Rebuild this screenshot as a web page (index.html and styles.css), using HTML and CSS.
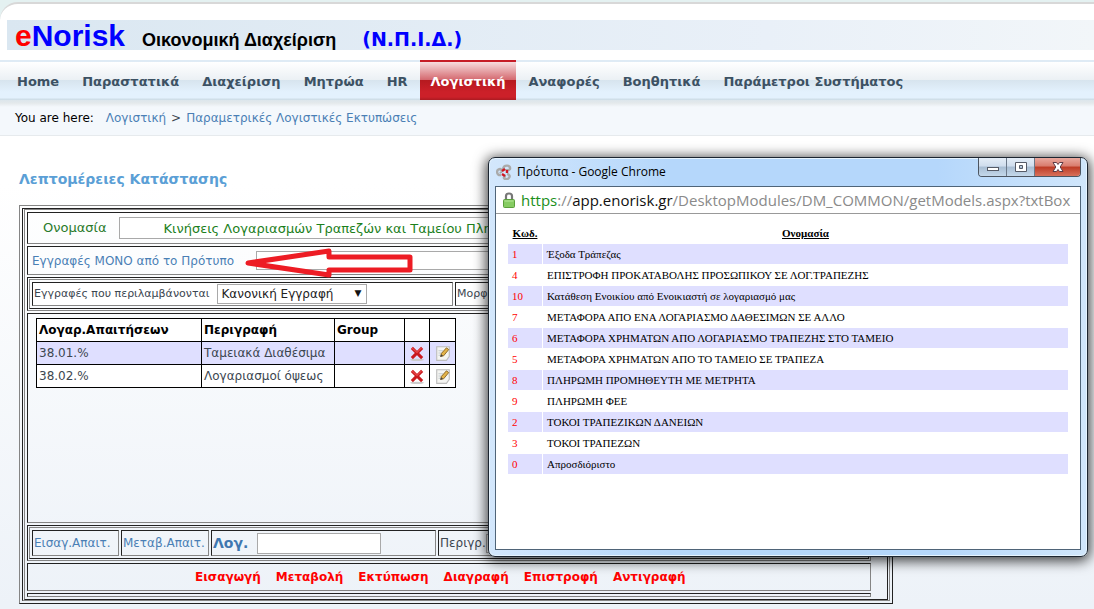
FILE: index.html
```html
<!DOCTYPE html>
<html lang="el">
<head>
<meta charset="utf-8">
<title>eNorisk - Οικονομική Διαχείριση</title>
<link rel="stylesheet" href="styles.css">
</head>
<body>
<svg class="defs" aria-hidden="true">
  <symbol id="icon-delete" viewBox="1 1 14 14">
    <ellipse cx="8" cy="14" rx="6" ry="1" fill="#ccc"/>
    <path d="M3.5 3.5 L12.500 12.500 M12.500 3.500 L3.500 12.500" stroke="#c9191e" stroke-width="2.600"/>
    <path d="M3.500 3.500 L8 7.500 L12 3.500" stroke="#e8494a" stroke-width="1" fill="none"/>
  </symbol>
  <symbol id="icon-edit" viewBox="1 1 14 14">
    <path d="M2.500 2.500 H13.500 V11 L11 14.500 H2.500 Z" fill="#f5f5f2" stroke="#bdbdbd"/>
    <path d="M4 6 H8 M4 8 H7 M4 10 H6" stroke="#c4cbd0"/>
    <path d="M6 11 L6.500 8.500 L11 3.500 L13 5 L8.500 10.500 Z" fill="#e3b348" stroke="#876320" stroke-width=".8"/>
    <path d="M5.500 11.500 L6.500 9 L8 10.500 Z" fill="#444"/>
  </symbol>
</svg>
<div class="page">
  <header class="banner">
    <h1 class="logo"><span class="logo-e">e</span>Norisk</h1>
    <span class="app-name">Οικονομική Διαχείριση</span>
    <span class="org">(Ν.Π.Ι.Δ.)</span>
  </header>
  <nav class="nav">
    <a href="#">Home</a>
    <a href="#">Παραστατικά</a>
    <a href="#">Διαχείριση</a>
    <a href="#">Μητρώα</a>
    <a href="#">HR</a>
    <a href="#" class="active">Λογιστική</a>
    <a href="#">Αναφορές</a>
    <a href="#">Βοηθητικά</a>
    <a href="#">Παράμετροι Συστήματος</a>
  </nav>
  <div class="crumbs">
    <span class="here">You are here:</span>
    <a href="#">Λογιστική</a><span>&gt;</span><a href="#">Παραμετρικές Λογιστικές Εκτυπώσεις</a>
  </div>
  <main class="content">
    <h2 class="title">Λεπτομέρειες Κατάστασης</h2>
    <div class="outset outer">
      <div class="inset frame">
        <div class="outset form">
          <div class="inset row-name">
            <label for="name">Ονομασία</label>
            <input id="name" class="name-box" value="Κινήσεις Λογαριασμών Τραπεζών και Ταμείου Πληρωμών">
          </div>
          <div class="inset row-model">
            <label for="model">Εγγραφές ΜΟΝΟ από το Πρότυπο</label>
            <input id="model" class="model-box">
            <svg class="arrow" viewBox="0 0 168 30" aria-hidden="true">
              <path d="M3 15 L84 3 V9 H165 V22 H84 V27 Z" fill="none" stroke="#ed1c24" stroke-width="5" stroke-linejoin="round"/>
            </svg>
          </div>
          <div class="inset wrap">
            <div class="outset cells filter">
              <div class="inset cell">
                <label for="kind">Εγγραφές που περιλαμβάνονται</label>
                <span class="select"><select id="kind"><option>Κανονική Εγγραφή</option></select></span>
              </div>
              <div class="inset cell">Μορφή</div>
            </div>
          </div>
          <div class="inset grid-area">
            <table class="accounts">
              <colgroup><col class="c-acc"><col class="c-desc"><col class="c-group"><col class="c-del"><col class="c-edit"></colgroup>
              <thead><tr><th>Λογαρ.Απαιτήσεων</th><th>Περιγραφή</th><th>Group</th><th></th><th></th></tr></thead>
              <tbody>
                <tr><td>38.01.%</td><td>Ταμειακά Διαθέσιμα</td><td></td>
                  <td><button aria-label="Διαγραφή 38.01"><svg><use href="#icon-delete"/></svg></button></td>
                  <td><button aria-label="Μεταβολή 38.01"><svg><use href="#icon-edit"/></svg></button></td></tr>
                <tr><td>38.02.%</td><td>Λογαριασμοί όψεως</td><td></td>
                  <td><button aria-label="Διαγραφή 38.02"><svg><use href="#icon-delete"/></svg></button></td>
                  <td><button aria-label="Μεταβολή 38.02"><svg><use href="#icon-edit"/></svg></button></td></tr>
              </tbody>
            </table>
          </div>
          <div class="inset wrap">
            <div class="outset cells entry">
              <div class="inset cell"><a href="#">Εισαγ.Απαιτ.</a></div>
              <div class="inset cell"><a href="#">Μεταβ.Απαιτ.</a></div>
              <div class="inset cell"><label class="acc-label" for="acc">Λογ.</label><input id="acc" class="acc-box"></div>
              <div class="inset cell"><label for="desc">Περιγρ.</label><input id="desc" class="desc-box"></div>
            </div>
          </div>
          <div class="inset actions">
            <a href="#">Εισαγωγή</a>
            <a href="#">Μεταβολή</a>
            <a href="#">Εκτύπωση</a>
            <a href="#">Διαγραφή</a>
            <a href="#">Επιστροφή</a>
            <a href="#">Αντιγραφή</a>
          </div>
          <div class="inset row-end"></div>
        </div>
      </div>
    </div>
  </main>
</div>

<section class="window" aria-label="Πρότυπα">
  <div class="titlebar">
    <svg class="favicon" viewBox="0 0 16 16" aria-hidden="true">
      <g fill="none" stroke="#aaa" stroke-width="2.400">
        <path d="M7 5 C8 0 15 1 14 5 C13 7 10 6 10 5"/>
        <path d="M11 10 C16 11 13 16 9 15 C7 14 8 12 10 12"/>
        <path d="M5 11 C0 12 0 5 4 5 C7 6 5 9 4 8"/>
      </g>
      <g fill="none" stroke="#cf1822" stroke-width="2.400">
        <path d="M6 7 L9 5 M11 6 L11 9 M9 12 L6 10"/>
      </g>
    </svg>
    <span class="window-title">Πρότυπα - Google Chrome</span>
    <div class="controls">
      <button aria-label="Minimize"><svg viewBox="0 0 14 12"><rect x="1.500" y="6.500" width="11" height="3" fill="#fff" stroke="#555a66"/></svg></button>
      <button aria-label="Maximize"><svg viewBox="0 0 14 12"><path d="M1.500 1.500 H12.500 V10.500 H1.500 Z M5.500 4.500 V7.500 H8.500 V4.500 Z" fill="#fff" fill-rule="evenodd" stroke="#555a66"/></svg></button>
      <button class="close" aria-label="Close"><svg viewBox="0 0 14 12"><path d="M2 1.500 H5.500 L7 3.500 L8.500 1.500 H12 L9.200 6 L12 10.500 H8.500 L7 8.500 L5.500 10.500 H2 L4.800 6 Z" fill="#fff" stroke="#5e3b45"/></svg></button>
    </div>
  </div>
  <div class="view">
    <div class="address">
      <svg class="lock" viewBox="0 0 12 16" aria-hidden="true">
        <path d="M3 8 V4 Q3 1.500 6 1.500 T9 4 V8" fill="none" stroke="#777" stroke-width="2.200"/>
        <rect x=".5" y="7.500" width="11" height="8" rx="1" fill="#86cc62" stroke="#5a9e3c"/>
        <path d="M1.500 9 H10.500" stroke="#b6e79a"/>
      </svg>
      <span class="url"><span class="scheme">https</span>://<span class="host">app.enorisk.gr</span>/DesktopModules/DM_COMMON/getModels.aspx?txtBox</span>
    </div>
    <table class="models">
      <thead><tr><th class="code"><a href="#">Κωδ.</a></th><th><a href="#">Ονομασία</a></th></tr></thead>
      <tbody>
        <tr><td>1</td><td>Έξοδα Τράπεζας</td></tr>
        <tr><td>4</td><td>ΕΠΙΣΤΡΟΦΗ ΠΡΟΚΑΤΑΒΟΛΗΣ ΠΡΟΣΩΠΙΚΟΥ ΣΕ ΛΟΓ.ΤΡΑΠΕΖΗΣ</td></tr>
        <tr><td>10</td><td>Κατάθεση Ενοικίου από Ενοικιαστή σε λογαριασμό μας</td></tr>
        <tr><td>7</td><td>ΜΕΤΑΦΟΡΑ ΑΠΟ ΕΝΑ ΛΟΓΑΡΙΑΣΜΟ ΔΑΘΕΣΙΜΩΝ ΣΕ ΑΛΛΟ</td></tr>
        <tr><td>6</td><td>ΜΕΤΑΦΟΡΑ ΧΡΗΜΑΤΩΝ ΑΠΟ ΛΟΓΑΡΙΑΣΜΟ ΤΡΑΠΕΖΗΣ ΣΤΟ ΤΑΜΕΙΟ</td></tr>
        <tr><td>5</td><td>ΜΕΤΑΦΟΡΑ ΧΡΗΜΑΤΩΝ ΑΠΟ ΤΟ ΤΑΜΕΙΟ ΣΕ ΤΡΑΠΕΖΑ</td></tr>
        <tr><td>8</td><td>ΠΛΗΡΩΜΗ ΠΡΟΜΗΘΕΥΤΗ ΜΕ ΜΕΤΡΗΤΑ</td></tr>
        <tr><td>9</td><td>ΠΛΗΡΩΜΗ ΦΕΕ</td></tr>
        <tr><td>2</td><td>ΤΟΚΟΙ ΤΡΑΠΕΖΙΚΩΝ ΔΑΝΕΙΩΝ</td></tr>
        <tr><td>3</td><td>ΤΟΚΟΙ ΤΡΑΠΕΖΩΝ</td></tr>
        <tr><td>0</td><td>Απροσδιόριστο</td></tr>
      </tbody>
    </table>
  </div>
</section>
</body>
</html>
```

FILE: styles.css
```css
* { box-sizing: border-box; }
body {
  margin: 0;
  background: #e4f1f1;
  font: 12px/16px "DejaVu Sans", sans-serif;
  color: #3c4650;
  overflow: hidden;
}
a { color: #4a7fb5; text-decoration: none; }
input {
  border: 1px solid #a9a9a9;
  background: #fff;
  padding: 0;
  font: inherit;
}
button { border: 0; padding: 0; background: none; }
.defs { display: none; }

.page {
  margin-top: 2px;
  border-top: 2px solid #d8d8d8;
  border-radius: 18px 0 0 0;
  background: linear-gradient(#fff 0, #fff 180px, #edf2f8 600px);
  min-height: calc(100vh - 2px);
  overflow: hidden;
}

/* Banner */
.banner {
  display: flex;
  align-items: baseline;
  height: 30px;
  margin: 16px 0 10px 7px;
  padding-left: 8px;
  background: linear-gradient(90deg, #dae7f1, #e9f0f8 70%, #f2f6f9);
  white-space: nowrap;
}
.logo {
  margin: 0;
  font: bold 30px/32px "Liberation Sans", sans-serif;
  color: #00f;
}
.logo-e { color: #f00; }
.app-name {
  margin-left: 17px;
  font: bold 18px/30px "Liberation Sans", sans-serif;
  color: #000;
}
.org {
  margin-left: 26px;
  font: bold 19px/30px "DejaVu Sans", sans-serif;
  color: #00f;
}

/* Navigation */
.nav {
  display: flex;
  gap: 1px;
  padding-left: 6px;
  height: 40px;
  background: linear-gradient(#dfebf5 0, #dfebf5 2px, #fff 2px, #ebf0f4 20px, #d7e4ee 20px, #e3f1fd 32px, #e3f1fd 38px, #cfdee8 39px);
}
.nav a {
  padding: 0 11px;
  font: bold 13px/43px "DejaVu Sans", sans-serif;
  color: #3c5163;
  white-space: nowrap;
}
.nav a.active {
  color: #fff;
  background: linear-gradient(#c61c26 0, #c61c26 2px, #f7dcde 2px, #d4686e 20px, #b5191f 20px, #cc2029 32px, #cc2029 37px, #ab1a21);
}

/* Breadcrumbs */
.crumbs {
  display: flex;
  gap: 5px;
  height: 36px;
  padding-left: 15px;
  line-height: 37px;
  border-bottom: 1px solid #e6eaed;
  background: linear-gradient(#dce6ec 0, #e4e9eb 3px, #f4f8fc 7px);
}
.crumbs .here { color: #000; margin-right: 7px; }

/* Nested bevelled frames */
.content { padding: 0 16px 5px 19px; }
.title {
  margin: 0;
  padding: 35px 0 18px;
  font-size: 14px;
  line-height: 16px;
  color: #5b9fd6;
}
.outset { border: 1px solid; border-color: #858585 #222 #222 #858585; }
.inset { border: 1px solid; border-color: #222 #858585 #858585 #222; }
.outer { max-width: 874px; padding: 2px; }
.frame { padding: 0 1px; }
.form {
  display: flex;
  flex-direction: column;
  gap: 2px;
  padding: 2px 16px 2px 2px;
}
.row-name {
  display: flex;
  align-items: center;
  height: 32px;
  padding: 0 15px;
  gap: 12px;
  font-size: 13px;
  color: #2a7a2a;
}
.name-box {
  flex: 1;
  height: 22px;
  padding-left: 44px;
  color: #1c801c;
}
.row-model {
  position: relative;
  display: flex;
  align-items: center;
  height: 29px;
  padding: 0 4px;
  gap: 22px;
  color: #4a7fb5;
}
.model-box { flex: 1; height: 19px; }
.arrow {
  position: absolute;
  left: 217px;
  top: 1px;
  width: 168px;
  height: 30px;
}
.wrap { padding: 1px; }
.cells { display: grid; gap: 2px; padding: 2px; }
.cell {
  display: flex;
  align-items: center;
  padding: 0 1px;
  white-space: nowrap;
  overflow: hidden;
}
.filter { grid-template-columns: 421px 1fr; font-size: 11px; }
.filter .cell { height: 24px; gap: 7px; background: #fff; }
.select { position: relative; }
.select::after {
  content: "▼";
  position: absolute;
  right: 5px;
  top: 1px;
  color: #111;
  font-size: 9px;
  pointer-events: none;
}
.select select {
  appearance: none;
  display: block;
  width: 150px;
  height: 20px;
  padding: 0 4px;
  border: 1px solid #a9a9a9;
  border-radius: 0;
  background: #fff;
  color: #222;
  font: 12px/18px "DejaVu Sans", sans-serif;
}
.grid-area { height: 210px; padding: 4px 8px; }

.accounts { border-collapse: collapse; table-layout: fixed; width: 420px; background: #fff; }
.accounts th, .accounts td {
  height: 23px;
  padding: 0 2px;
  border: 1px solid #000;
  text-align: left;
}
.accounts th { color: #000; }
.accounts tbody tr:nth-child(odd) { background: #dfdfff; }
.c-acc { width: 165px; }
.c-desc { width: 133px; }
.c-group { width: 70px; }
.c-del { width: 25px; }
.c-edit { width: 26px; }
.accounts button { display: block; margin: 0 auto; }
.accounts svg { display: block; width: 16px; height: 16px; }

.entry { grid-template-columns: 87px 88px 225px 1fr; }
.entry .cell { height: 26px; }
.acc-label { font-size: 14px; font-weight: bold; color: #3f77b0; }
.acc-box { width: 124px; height: 21px; margin-left: 9px; }
.desc-box { flex: 1; height: 19px; }

.actions {
  display: flex;
  gap: 15px;
  height: 28px;
  padding-left: 167px;
  line-height: 26px;
  font-weight: bold;
}
.actions a { color: #f00; }
.row-end { height: 4px; }

/* Browser window over the page */
.window {
  position: absolute;
  left: 488px;
  top: 157px;
  width: 600px;
  height: 400px;
  display: flex;
  flex-direction: column;
  padding: 0 6px 6px;
  border: 1px solid #1c2530;
  border-radius: 7px;
  background: linear-gradient(90deg, #d3e7fc, #b5d7fb 30%, #b5d7fb 75%, #d0e6fb);
  box-shadow: inset 0 0 0 1px #e6f4ff, 0 2px 13px 2px rgba(0, 0, 0, .75);
}
.titlebar { display: flex; height: 28px; padding-left: 1px; }
.favicon { width: 16px; height: 16px; margin-top: 6px; }
.window-title {
  flex: 1;
  padding-left: 5px;
  font: 12px/28px "Open Sans", sans-serif;
  color: #000;
}
.controls {
  display: flex;
  height: 19px;
  border: 1px solid #4c5561;
  border-top: 0;
  border-radius: 0 0 4px 4px;
  overflow: hidden;
}
.controls button {
  display: grid;
  place-items: center;
  width: 28px;
  border-right: 1px solid #6b7889;
  background: linear-gradient(#e4edf7 0, #cfdded 45%, #a8bdd3 50%, #c4d8ea);
}
.controls svg { width: 14px; height: 12px; }
.controls .close {
  width: 45px;
  border-right: 0;
  background: linear-gradient(#e9a99f 0, #d97c6d 45%, #bd3b25 50%, #d8705a);
}
.view {
  flex: 1;
  border: 1px solid #4f6478;
  background: #fff;
  overflow: hidden;
}
.address {
  display: flex;
  align-items: center;
  height: 27px;
  padding: 0 3px 0 7px;
  border-bottom: 1px solid #999;
}
.lock { flex: none; width: 12px; height: 16px; }
.url {
  flex: 1;
  padding-left: 6px;
  overflow: hidden;
  white-space: nowrap;
  font: 15px/26px "Open Sans", sans-serif;
  color: #8a8a8a;
}
.scheme { color: #1a8f1a; }
.host { color: #111; }
.models {
  width: calc(100% - 22px);
  margin: 8px 0 0 11px;
  border-spacing: 1px;
  font: 11px/16px "Liberation Serif", serif;
  color: #000;
}
.models th, .models td { height: 20px; padding: 0 4px; text-align: left; }
.models th { text-align: center; }
.models th a { color: #000; text-decoration: underline; }
.models .code { width: 34px; }
.models td:first-child { color: #f00; }
.models tbody tr:nth-child(odd) td { background: #dfdfff; }
```
